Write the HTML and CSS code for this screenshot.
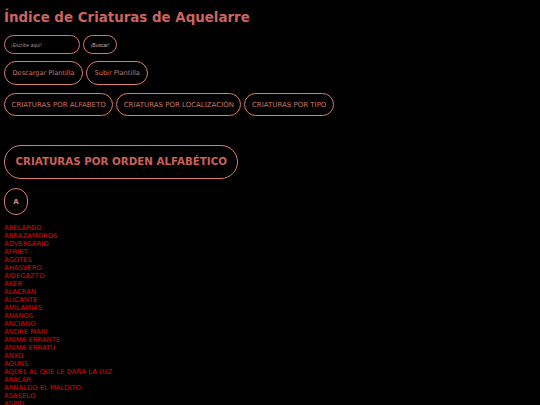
FILE: index.html
```html
<!DOCTYPE html>
<html lang="es">
<head>
<meta charset="utf-8">
<title>Índice de Criaturas de Aquelarre</title>
<link rel="stylesheet" href="styles.css">
</head>
<body>
<div class="page">
  <h1 class="title">Índice de Criaturas de Aquelarre</h1>
  <div class="row search-row">
    <input class="search-input" type="text" placeholder="¡Escribe aquí!">
    <button class="search-btn">¡Buscar!</button>
  </div>
  <div class="row tpl-row">
    <button class="pill pill-tpl">Descargar Plantilla</button>
    <button class="pill pill-tpl">Subir Plantilla</button>
  </div>
  <div class="row nav-row">
    <button class="pill pill-nav">CRIATURAS POR ALFABETO</button>
    <button class="pill pill-nav">CRIATURAS POR LOCALIZACIÓN</button>
    <button class="pill pill-nav">CRIATURAS POR TIPO</button>
  </div>
  <h2 class="section">CRIATURAS POR ORDEN ALFABÉTICO</h2>
  <div class="letter">A</div>
  <ul class="list">
    <li>ABELARDO</li>
    <li>ABRAZAMOROS</li>
    <li>ADVERSARIO</li>
    <li>AFRIET</li>
    <li>AGOTES</li>
    <li>AHASVERO</li>
    <li>AIDEGAZTO</li>
    <li>AKER</li>
    <li>ALACRAN</li>
    <li>ALICANTE</li>
    <li>AMILAMIAS</li>
    <li>ANANOS</li>
    <li>ANCIANO</li>
    <li>ANDRE MARI</li>
    <li>ANIMA ERRANTE</li>
    <li>ANIMA ERRATU</li>
    <li>ANXO</li>
    <li>AOUNS</li>
    <li>AQUEL AL QUE LE DAÑA LA LUZ</li>
    <li>ARALAR</li>
    <li>ARNALDO EL MALDITO</li>
    <li>ASASELO</li>
    <li>ASPID</li>
  </ul>
</div>
</body>
</html>
```

FILE: styles.css
```css
html, body {
  margin: 0;
  padding: 0;
  background: #000;
}
body {
  font-family: "DejaVu Sans", Verdana, sans-serif;
  color: #cd6b5e;
  overflow: hidden;
}
.page {
  padding: 9px 4px 0 4px;
}
.title {
  margin: 0;
  font-size: 13.4px;
  line-height: 17px;
  font-weight: bold;
  color: #cd6461;
}
.row {
  display: flex;
  gap: 3px;
  align-items: center;
}
.search-row {
  margin-top: 9px;
}
.search-input {
  box-sizing: border-box;
  width: 76px;
  height: 19px;
  background: #000;
  border: 1px solid #d4786b;
  border-radius: 10px;
  padding: 0 6px;
  font-family: "Liberation Sans", Arial, sans-serif;
  font-size: 5px;
  color: #bbb;
  outline: none;
}
.search-input::placeholder {
  color: #9a8a88;
}
.search-btn {
  box-sizing: border-box;
  height: 19px;
  width: 34px;
  padding: 0;
  background: #000;
  border: 1px solid #d4786b;
  border-radius: 10px;
  font-family: "Liberation Sans", Arial, sans-serif;
  font-size: 5px;
  color: #c8b0aa;
}
.pill {
  box-sizing: border-box;
  background: #000;
  border: 1.5px solid #d97e6e;
  font-family: "DejaVu Sans", Verdana, sans-serif;
  color: #c4786c;
  padding: 0;
  text-align: center;
}
.tpl-row {
  margin-top: 7px;
}
.pill-tpl {
  height: 24px;
  border-radius: 12px;
  font-size: 6.6px;
  padding: 0 7.5px;
}
.nav-row {
  margin-top: 8px;
}
.pill-nav {
  height: 23px;
  border-radius: 12px;
  font-size: 7px;
  padding: 0 6.5px;
}
.section {
  display: inline-block;
  margin: 29px 0 0 0;
  box-sizing: border-box;
  height: 34px;
  line-height: 31px;
  padding: 0 10.5px;
  border: 1.5px solid #d97e6e;
  border-radius: 17px;
  font-size: 10.3px;
  font-weight: bold;
  color: #c9605c;
}
.letter {
  box-sizing: border-box;
  width: 24px;
  height: 27px;
  margin-top: 9px;
  border: 1.5px solid #d97e6e;
  border-radius: 12px;
  display: flex;
  align-items: center;
  justify-content: center;
  font-size: 7px;
  font-weight: bold;
  color: #d4877a;
}
.list {
  list-style: none;
  margin: 9px 0 0 0;
  padding: 0;
}
.list li {
  font-size: 6.8px;
  line-height: 8px;
  color: #e00000;
}
```
